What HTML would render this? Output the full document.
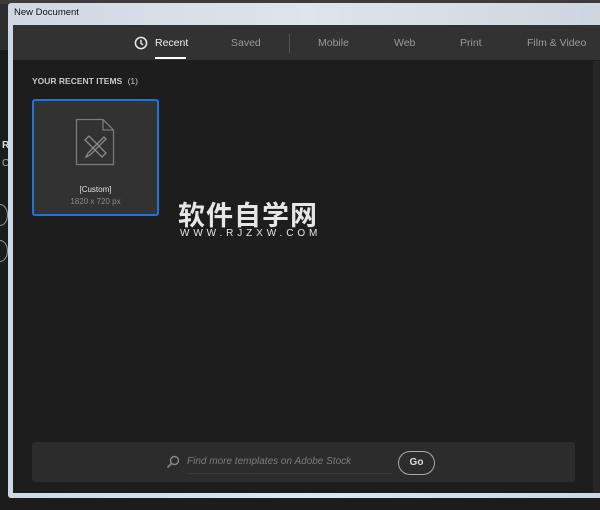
<!DOCTYPE html>
<html><head><style>
*{margin:0;padding:0;box-sizing:border-box}
body{width:600px;height:510px;background:#1c1c1c;position:relative;overflow:hidden;font-family:"Liberation Sans",sans-serif}
.abs{position:absolute}
.tab{font-size:10.5px;top:37px}
</style></head><body>
<div class="abs" style="left:0;top:0;width:600px;height:50px;background:#2e2e2e"></div>
<div class="abs" style="left:0;top:0;width:600px;height:4px;background:#3c3c3c"></div>
<div class="abs" style="left:2px;top:140px;color:#ddd;font-size:10px;font-weight:bold">R</div>
<div class="abs" style="left:2px;top:158px;color:#aaa;font-size:10px">C</div>
<div class="abs" style="left:-8px;top:204px;width:16px;height:22px;border:1px solid #999;border-radius:50%"></div>
<div class="abs" style="left:-8px;top:240px;width:16px;height:22px;border:1px solid #999;border-radius:50%"></div>
<div class="abs" style="left:8px;top:3px;width:600px;height:495px;background:linear-gradient(90deg,#cfd8e3,#dde5ee 50%,#cdd6e0);border-radius:3px"></div>
<div class="abs" style="left:14px;top:7px;font-size:9.5px;color:#111">New Document</div>
<div class="abs" style="left:13px;top:25px;width:600px;height:468px;background:#1d1d1d"></div>
<div class="abs" style="left:13px;top:25px;width:600px;height:35px;background:#323232"></div>
<div class="abs" style="left:593px;top:61px;width:10px;height:432px;background:#262626"></div>
<svg class="abs" style="left:134px;top:36px" width="14" height="14" viewBox="0 0 14 14"><circle cx="7" cy="7" r="5.6" fill="none" stroke="#e8e8e8" stroke-width="1.5"/><path d="M7 3.8V7.3L9 9" fill="none" stroke="#e8e8e8" stroke-width="1.4"/></svg>
<div class="abs tab" style="left:155px;color:#f0f0f0">Recent</div>
<div class="abs" style="left:155px;top:57px;width:31px;height:2px;background:#fff"></div>
<div class="abs tab" style="left:231px;color:#9a9a9a">Saved</div>
<div class="abs" style="left:289px;top:34px;width:1px;height:19px;background:#555"></div>
<div class="abs tab" style="left:318px;color:#9a9a9a">Mobile</div>
<div class="abs tab" style="left:394px;color:#9a9a9a">Web</div>
<div class="abs tab" style="left:460px;color:#9a9a9a">Print</div>
<div class="abs tab" style="left:527px;color:#9a9a9a">Film &amp; Video</div>
<div class="abs" style="left:32px;top:76px;font-size:8.5px;color:#c8c8c8;font-weight:bold">YOUR RECENT ITEMS <span style="font-weight:normal;margin-left:3px">(1)</span></div>
<div class="abs" style="left:32px;top:99px;width:127px;height:117px;background:#323232;border:2px solid #1f72d8;border-radius:3px"></div>
<svg class="abs" style="left:74px;top:117px" width="42" height="50" viewBox="0 0 42 50"><path d="M2.5 2.5H29L39.5 13V47.5H2.5Z M29 2.5V13H39.5" fill="none" stroke="#7a7a7a" stroke-width="1.3"/><path d="M11 23L15 19L32 36L28 40Z" fill="none" stroke="#8a8a8a" stroke-width="1.3"/><path d="M30 20L14 36L12 40L16 38L32 22Z" fill="none" stroke="#8a8a8a" stroke-width="1.3"/></svg>
<div class="abs" style="left:32px;top:185px;width:127px;text-align:center;font-size:8px;color:#e0e0e0">[Custom]</div>
<div class="abs" style="left:32px;top:197px;width:127px;text-align:center;font-size:8px;color:#8a8a8a">1820 x 720 px</div>
<div class="abs" style="left:178px;top:199px;font-family:'Noto Sans CJK SC',sans-serif;font-size:27px;font-weight:bold;color:#e6e6e6;letter-spacing:1px;line-height:30px">软件自学网</div>
<div class="abs" style="left:180px;top:228px;font-size:10px;color:#e6e6e6;letter-spacing:3.9px">WWW.RJZXW.COM</div>
<div class="abs" style="left:32px;top:442px;width:543px;height:40px;background:#2c2c2c;border-radius:3px"></div>
<svg class="abs" style="left:166px;top:455px" width="14" height="14" viewBox="0 0 14 14"><circle cx="8.5" cy="5.5" r="4" fill="none" stroke="#888" stroke-width="1.4"/><path d="M5.5 8.5L1.5 12.5" stroke="#888" stroke-width="1.6"/></svg>
<div class="abs" style="left:187px;top:456px;font-size:10px;font-style:italic;color:#7c7c7c">Find more templates on Adobe Stock</div>
<div class="abs" style="left:187px;top:473px;width:205px;height:1px;background:#3a3a3a"></div>
<div class="abs" style="left:398px;top:451px;width:37px;height:24px;border:1.5px solid #aaa;border-radius:12px;color:#ddd;font-size:10px;font-weight:bold;text-align:center;line-height:21px">Go</div>
</body></html>
